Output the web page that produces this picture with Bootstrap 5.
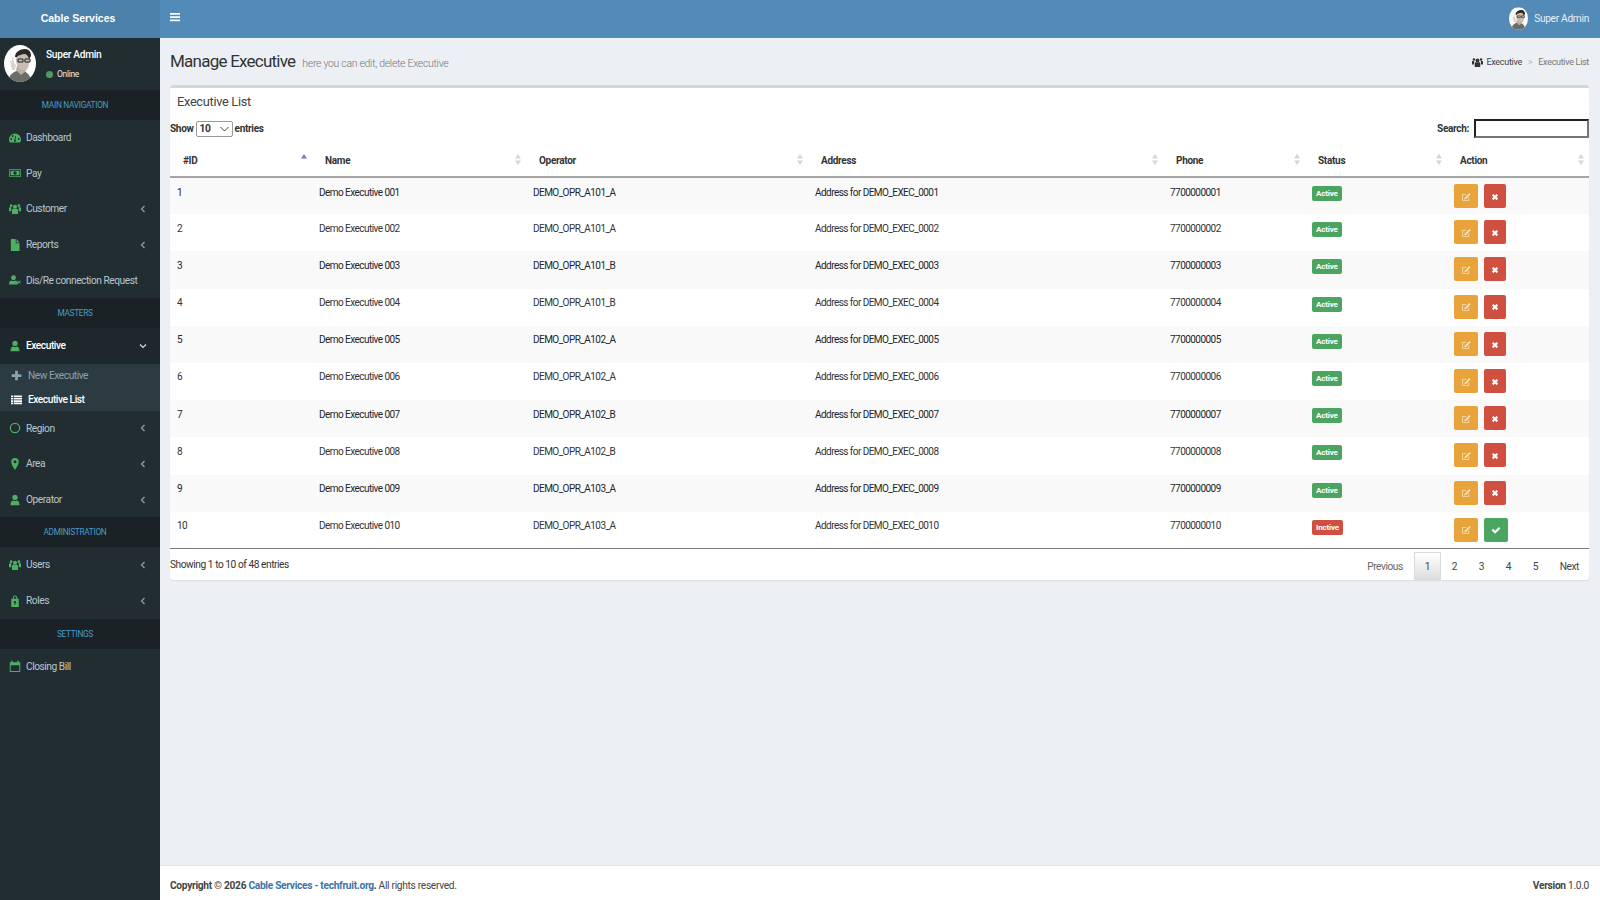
<!DOCTYPE html>
<html lang="en">
<head>
    <meta charset="UTF-8">
    <meta name="viewport" content="width=device-width, initial-scale=1.0">
    <title>Manage Executive</title>
    <link href="https://cdn.jsdelivr.net/npm/bootstrap@5.3.0/dist/css/bootstrap.min.css" rel="stylesheet">
    <style>
        html, body { height: 100%; }
        body { font-family: Roboto, "Noto Sans", sans-serif; font-size: 10.2px; letter-spacing: -.03em; color: #333; background: #ecf0f5; overflow: hidden; }
        .app-shell { height: 900px; }
        .side-col { width: 160px; background: #222d32; flex: none; }
        .logo-bar { height: 38px; background: #4c81ac; color: #fff; font: bold 10.5px "Liberation Sans", sans-serif; letter-spacing: 0; padding-right: 4px; padding-bottom: 2px; }
        .user-pane { height: 52px; padding: 7px 4px; gap: 10px; }
        .user-pane .who { font-weight: 500; font-size: 10.2px; color: #fff; line-height: 14px; margin-top: 3px; }
        .user-pane .state { font-size: 8.5px; color: #e5e9eb; line-height: 12px; margin-top: 6px; }
        .dot-online { width: 7px; height: 7px; border-radius: 50%; background: #4f9a5c; }
        .avatar-round { width: 32px; height: 37px; border-radius: 50%; flex: none; }
        .nav-head { height: 30px; background: #1a2226; color: #4b9cc9; font-size: 8.3px; text-align: center; line-height: 30px; padding-right: 10px; }
        .nav-row { height: 35.6px; color: #b8c7ce; font-size: 10.2px; letter-spacing: -.045em; padding-left: 9px; padding-right: 14px; text-decoration: none; white-space: nowrap; }
        .nav-row.is-open { background: #1e282c; color: #fff; font-weight: 500; }
        .nav-row svg.lead-ico { width: 12px; height: 12px; margin-right: 5px; flex: none; fill: #4caf64; }
        .nav-row .chev { width: 6px; height: 8px; margin-left: auto; fill: none; stroke: #8aa4af; stroke-width: 1.2; }
        .nav-row.is-open .chev { width: 8px; height: 6px; margin-right: -1px; stroke: #d5dde1; }
        .sub-wrap { background: #2c3b41; height: 47px; }
        .sub-row { height: 24px; padding-left: 11px; color: #8aa4af; font-size: 10.2px; letter-spacing: -.045em; text-decoration: none; }
        .sub-row.is-current { color: #fff; font-weight: 500; }
        .sub-row svg { width: 11px; height: 11px; margin-right: 6px; fill: currentColor; }
        .main-col { min-width: 0; }
        .top-bar { height: 38px; background: #528ab8; color: #fff; padding: 0 11px 0 10px; flex: none; border-bottom: 1px solid #5a8fba; }
        .top-bar .burger { width: 10px; height: 10px; fill: #fff; margin-top: -4px; }
        .top-bar .who-top { font-size: 10.2px; color: #e9f0f6; }
        .avatar-mini { width: 19px; height: 23px; border-radius: 50%; margin-right: 6px; }
        .page-area { padding: 0 11px 0 10px; }
        .page-head { height: 47px; padding-top: 2px; }
        .page-title { font-size: 17px; line-height: 1; font-weight: 400; color: #333; margin: 0; letter-spacing: -.045em; }
        .page-sub { font-size: 10.5px; color: #777; margin-left: 7px; font-weight: 300; }
        .crumbs { font-size: 9px; color: #444; }
        .crumbs svg { width: 11px; height: 11px; fill: #333; margin-right: 3px; }
        .crumbs .sep { color: #bbb; margin: 0 6px; }
        .crumbs .here { color: #777; }
        .list-box { background: #fff; border-top: 3px solid #d2d6de; border-radius: 3px; height: 495px; box-shadow: 0 1px 1px rgba(0,0,0,.08); }
        .box-head { height: 28px; padding: 4px 7px 0; font-size: 12.8px; line-height: 20px; color: #444; }
        .tool-row { height: 25px; font-weight: 700; font-size: 10px; color: #333; }
        .show-select { width: 37px; height: 16px; border: 1px solid #999; border-radius: 2px; padding-left: 3px; font-size: 10.2px; font-weight: 700; line-height: 14px; }
        .show-select svg { width: 9px; height: 6px; fill: none; stroke: #444; margin-left: auto; margin-right: 3px; }
        .tool-row .mx-1 { margin-left: 2px !important; margin-right: 2px !important; }
        .search-box { width: 115px; height: 19px; border: 2px inset #767676; margin-left: 5px; padding: 0 3px; font-size: 10px; }
        .exec-table { table-layout: fixed; width: 100%; margin: 0; font-size: 10px; letter-spacing: -.055em; color: #333; --bs-table-striped-bg: #f9f9f9; --bs-table-border-color: transparent; }
        .exec-table th { height: 36px; padding: 3px 0 0 13px; font-weight: 700; letter-spacing: -.03em; vertical-align: middle; position: relative; border-bottom: 2px solid #a5a5a5; }
        .exec-table td { height: 37.2px; padding: 7.5px 0 0 7px; vertical-align: top; line-height: 14px; border: 0; }
        .exec-table tbody tr:last-child td { border-bottom: 1px solid #777; }
        .w-id { width: 142px; } .w-name { width: 214px; } .w-opr { width: 282px; } .w-addr { width: 355px; }
        .w-phone { width: 142px; } .w-status { width: 142px; } .w-action { width: 142px; }
        .sort-mark { position: absolute; right: 5px; top: 50%; margin-top: -5px; width: 6px; height: 11px; }
        .state-tag { display: inline-block; color: #fff; font-size: 8px; font-weight: 700; letter-spacing: -.02em; border-radius: 2px; padding: 0 4px; height: 15px; line-height: 15px; margin-top: .5px; }
        .tag-on { background: #4ba560; }
        .tag-off { background: #cf5040; }
        .act-btn { height: 24px; width: 24px; border-radius: 2px; padding: 0; border: 0; margin-right: 6px; margin-left: 0; margin-top: 0; vertical-align: top; }
        .act-btn svg { width: 10px; height: 10px; }
        .btn-edit { background: #e8a33b; width: 24px; }
        .btn-drop { background: #cf5040; width: 22px; }
        .btn-okay { background: #4ba560; }
        .exec-table td.act-cell { padding-top: 6px; }
        .foot-row { height: 31px; color: #333; font-size: 10.2px; letter-spacing: -.045em; }
        .pager { height: 28px; align-self: flex-start; padding-right: 3px; margin-top: 3px; }
        .pager a { width: 27px; height: 28px; color: #444; font-size: 10.2px; text-decoration: none; }
        .pager a.step { width: auto; padding: 0 11px; color: #666; }
        .pager a.step:last-child { padding-right: 7px; color: #444; }
        .pager a.is-on { background: linear-gradient(#fff, #dcdcdc); border: 1px solid #dcdcdc; border-bottom: 0; }
        .page-foot { height: 35px; background: #fff; border-top: 1px solid #e2e5e9; padding: 5px 11px 0 10px; flex: none; font-size: 10.2px; color: #444; }
        .page-foot a { color: #3c75a5; font-weight: 700; text-decoration: none; }
    </style>
</head>
<body>
    <svg width="0" height="0" class="d-block position-absolute">
        <symbol id="i-face" viewBox="0 0 32 37">
            <rect width="32" height="37" fill="#fdfdfd"/>
            <path d="M4 37c1-8 6-11 12-12 6 1 10 4 12 12z" fill="#6d6d68"/>
            <path d="M12 25l2-7h9l-1 8-5 4z" fill="#b9afa5"/>
            <path d="M12 10c1-4 6-6 10-5 4 1 5 5 4 9l-2 9c-2 3-7 3-9 0l-3-6z" fill="#c9bdb1"/>
            <path d="M11 12c0-5 5-8 10-8 4 0 6 3 6 7l-2 3c-1-3-2-5-5-5-3 1-6 1-7 3z" fill="#2c2a29"/>
            <path d="M14 14h5v3h-5zM21 14h5v3h-5z" fill="none" stroke="#222" stroke-width="1"/>
            <path d="M6 16l2 9 3 0 1-5-2-2-1-6-1 0v5l-1-1z" fill="#ddd5cd"/>
        </symbol>
        <symbol id="i-gauge" viewBox="0 0 16 16"><path fill-rule="evenodd" d="M8 2a8 8 0 0 0-8 8c0 1.600.5 3.100 1.300 4h13.400c.8-.9 1.300-2.400 1.300-4a8 8 0 0 0-8-8zM3 10.500a1.200 1.200 0 1 1 0-2.400 1.200 1.200 0 0 1 0 2.400zm2-4a1.200 1.200 0 1 1 0-2.400 1.200 1.200 0 0 1 0 2.400zM8 13a1.500 1.500 0 0 1-.7-2.800l1.200-5 1 .2-1 5A1.500 1.500 0 0 1 8 13zm5-2.500a1.200 1.200 0 1 1 0-2.400 1.200 1.200 0 0 1 0 2.400z"/></symbol>
        <symbol id="i-money" viewBox="0 0 16 16"><path fill-rule="evenodd" d="M0 3h16v10H0zm1 1v8h14V4zm2 1h10a2 2 0 0 0 1 1v4a2 2 0 0 0-1 1H3a2 2 0 0 0-1-1V6a2 2 0 0 0 1-1zm5 .8A2.200 2.200 0 1 0 8 10.200 2.200 2.200 0 0 0 8 5.800z"/></symbol>
        <symbol id="i-users" viewBox="0 0 16 16"><circle cx="8" cy="5" r="2.800"/><circle cx="2.800" cy="3.500" r="1.800"/><circle cx="13.200" cy="3.500" r="1.800"/><path d="M4 9c0-1 1-1.500 2-1.500h4c1 0 2 .5 2 1.500v5.500H4zM0 6.500C0 6 .6 5.800 1.200 5.800h2L3 8v3H0zM16 6.500c0-.5-.6-.7-1.200-.7h-2L13 8v3h3z"/></symbol>
        <symbol id="i-file" viewBox="0 0 16 16"><path d="M2.500 0H9v5.500h5V16H2.500zM10 0l4 4.500h-4z"/></symbol>
        <symbol id="i-userx" viewBox="0 0 16 16"><circle cx="6" cy="5" r="3.300"/><path d="M0 14c0-3.500 1.500-5.500 3-5.500 1.500 1.200 4.500 1.200 6 0 1 0 2 1 2.500 2.500V14zM12 8.500l1.500 1.500L15 8.500l.8.8-1.500 1.500 1.500 1.500-.8.8-1.500-1.500-1.500 1.500-.8-.8 1.500-1.500-1.500-1.500z"/></symbol>
        <symbol id="i-user" viewBox="0 0 16 16"><circle cx="8" cy="4.500" r="3.500"/><path d="M2 15c0-4 1.500-6.500 3.500-6.500 1.500 1 3.500 1 5 0 2 0 3.500 2.500 3.500 6.500z"/></symbol>
        <symbol id="i-ring" viewBox="0 0 16 16"><path fill-rule="evenodd" d="M8 1a7 7 0 1 0 0 14A7 7 0 0 0 8 1zm0 1.600a5.400 5.400 0 1 1 0 10.800A5.400 5.400 0 0 1 8 2.600z"/></symbol>
        <symbol id="i-pin" viewBox="0 0 16 16"><path fill-rule="evenodd" d="M8 0a5 5 0 0 0-5 5c0 3 3 8 5 11 2-3 5-8 5-11a5 5 0 0 0-5-5zm0 3a2 2 0 1 1 0 4 2 2 0 0 1 0-4z"/></symbol>
        <symbol id="i-lock" viewBox="0 0 16 16"><path fill-rule="evenodd" d="M5 5V3.500a3 3 0 0 1 6 0V5h2v11H3V5zm1.500 0h3V3.500a1.500 1.500 0 0 0-3 0zM8 8a1.500 1.500 0 0 0-.6 2.900V13h1.200v-2.100A1.500 1.500 0 0 0 8 8z"/></symbol>
        <symbol id="i-cal" viewBox="0 0 16 16"><path fill-rule="evenodd" d="M1 3h2V1h2v2h6V1h2v2h2v13H1zm1.300 4v7.700h11.400V7z"/></symbol>
        <symbol id="i-plus" viewBox="0 0 16 16"><path d="M6 1h4v5h5v4h-5v5H6v-5H1V6h5z"/></symbol>
        <symbol id="i-list" viewBox="0 0 16 16"><path d="M0 2h3v2.500H0zM4 2h12v2.500H4zM0 5.500h3V8H0zM4 5.500h12V8H4zM0 9h3v2.500H0zM4 9h12v2.500H4zM0 12.500h3V15H0zM4 12.500h12V15H4z"/></symbol>
        <symbol id="i-edit" viewBox="0 0 16 16"><path d="M2 3h7L7.800 4.300H3.300v8.400h8.400V9L13 7.800V14H2z" fill="#f6e3bf"/><path d="M13.500 1.500l2 2L8 11l-3 1 1-3z" fill="#f6e3bf"/></symbol>
        <symbol id="i-times" viewBox="0 0 16 16"><path d="M3 5.500L5.500 3 8 5.500 10.500 3 13 5.500 10.500 8 13 10.500 10.500 13 8 10.500 5.500 13 3 10.500 5.500 8z" fill="#fff"/></symbol>
        <symbol id="i-check" viewBox="0 0 16 16"><path d="M1 8.500L3.500 6l3 3 6-6L15 5.500 6.500 14z" fill="#fff"/></symbol>
        <symbol id="i-sort" viewBox="0 0 6 11"><path d="M3 0l3 4.500H0z" fill="#d6d6d6"/><path d="M3 11L0 6.500h6z" fill="#d6d6d6"/></symbol>
        <symbol id="i-sortup" viewBox="0 0 6 11"><path d="M3 0l3 4.500H0z" fill="#7a7ec4"/></symbol>
        <symbol id="i-chev" viewBox="0 0 6 8"><path d="M4.500 1L1.500 4l3 3"/></symbol>
    </svg>

    <div class="app-shell d-flex">
        <!-- Sidebar -->
        <aside class="side-col d-flex flex-column">
            <div class="logo-bar d-flex align-items-center justify-content-center">Cable Services</div>
            <div class="user-pane d-flex">
                <svg class="avatar-round"><use href="#i-face"/></svg>
                <div>
                    <div class="who">Super Admin</div>
                    <div class="state d-flex align-items-center gap-1"><span class="dot-online"></span>Online</div>
                </div>
            </div>
            <div class="nav-head">MAIN NAVIGATION</div>
            <a class="nav-row d-flex align-items-center" href="#"><svg class="lead-ico"><use href="#i-gauge"/></svg>Dashboard</a>
            <a class="nav-row d-flex align-items-center" href="#"><svg class="lead-ico"><use href="#i-money"/></svg>Pay</a>
            <a class="nav-row d-flex align-items-center" href="#"><svg class="lead-ico"><use href="#i-users"/></svg>Customer<svg class="chev"><use href="#i-chev"/></svg></a>
            <a class="nav-row d-flex align-items-center" href="#"><svg class="lead-ico"><use href="#i-file"/></svg>Reports<svg class="chev"><use href="#i-chev"/></svg></a>
            <a class="nav-row d-flex align-items-center" href="#"><svg class="lead-ico"><use href="#i-userx"/></svg>Dis/Re connection Request</a>
            <div class="nav-head">MASTERS</div>
            <a class="nav-row is-open d-flex align-items-center" href="#"><svg class="lead-ico"><use href="#i-user"/></svg>Executive<svg class="chev" viewBox="0 0 8 6"><path d="M1 1.500l3 3 3-3"/></svg></a>
            <div class="sub-wrap">
                <a class="sub-row d-flex align-items-center" href="#"><svg><use href="#i-plus"/></svg>New Executive</a>
                <a class="sub-row is-current d-flex align-items-center" href="#"><svg><use href="#i-list"/></svg>Executive List</a>
            </div>
            <a class="nav-row d-flex align-items-center" href="#"><svg class="lead-ico"><use href="#i-ring"/></svg>Region<svg class="chev"><use href="#i-chev"/></svg></a>
            <a class="nav-row d-flex align-items-center" href="#"><svg class="lead-ico"><use href="#i-pin"/></svg>Area<svg class="chev"><use href="#i-chev"/></svg></a>
            <a class="nav-row d-flex align-items-center" href="#"><svg class="lead-ico"><use href="#i-user"/></svg>Operator<svg class="chev"><use href="#i-chev"/></svg></a>
            <div class="nav-head">ADMINISTRATION</div>
            <a class="nav-row d-flex align-items-center" href="#"><svg class="lead-ico"><use href="#i-users"/></svg>Users<svg class="chev"><use href="#i-chev"/></svg></a>
            <a class="nav-row d-flex align-items-center" href="#"><svg class="lead-ico"><use href="#i-lock"/></svg>Roles<svg class="chev"><use href="#i-chev"/></svg></a>
            <div class="nav-head">SETTINGS</div>
            <a class="nav-row d-flex align-items-center" href="#"><svg class="lead-ico"><use href="#i-cal"/></svg>Closing Bill</a>
        </aside>

        <div class="main-col flex-grow-1 d-flex flex-column">
            <!-- Top bar -->
            <header class="top-bar d-flex align-items-center justify-content-between">
                <svg class="burger" viewBox="0 0 10 10"><path d="M0 1h10v1.800H0zM0 4.200h10V6H0zM0 7.400h10v1.800H0z"/></svg>
                <div class="who-top d-flex align-items-center"><svg class="avatar-mini"><use href="#i-face"/></svg>Super Admin</div>
            </header>

            <main class="page-area flex-grow-1">
                <div class="page-head d-flex align-items-center justify-content-between">
                    <div class="d-flex align-items-baseline">
                        <h1 class="page-title">Manage Executive</h1>
                        <span class="page-sub">here you can edit, delete Executive</span>
                    </div>
                    <div class="crumbs d-flex align-items-center">
                        <svg><use href="#i-users"/></svg>Executive<span class="sep">&gt;</span><span class="here">Executive List</span>
                    </div>
                </div>

                <section class="list-box">
                    <div class="box-head">Executive List</div>
                    <div class="tool-row d-flex align-items-center justify-content-between">
                        <div class="d-flex align-items-center">Show
                            <span class="show-select d-inline-flex align-items-center mx-1">10<svg viewBox="0 0 9 6"><path d="M.5 1l4 4 4-4"/></svg></span>
                            entries</div>
                        <div class="d-flex align-items-center">Search:<input class="search-box" type="text"></div>
                    </div>
                    <table class="table table-striped exec-table">
                        <colgroup>
                            <col class="w-id"><col class="w-name"><col class="w-opr"><col class="w-addr">
                            <col class="w-phone"><col class="w-status"><col class="w-action">
                        </colgroup>
                        <thead>
                            <tr>
                                <th>#ID<svg class="sort-mark"><use href="#i-sortup"/></svg></th>
                                <th>Name<svg class="sort-mark"><use href="#i-sort"/></svg></th>
                                <th>Operator<svg class="sort-mark"><use href="#i-sort"/></svg></th>
                                <th>Address<svg class="sort-mark"><use href="#i-sort"/></svg></th>
                                <th>Phone<svg class="sort-mark"><use href="#i-sort"/></svg></th>
                                <th>Status<svg class="sort-mark"><use href="#i-sort"/></svg></th>
                                <th>Action<svg class="sort-mark"><use href="#i-sort"/></svg></th>
                            </tr>
                        </thead>
                        <tbody id="execRows"></tbody>
                    </table>
                    <div class="foot-row d-flex align-items-center justify-content-between">
                        <span>Showing 1 to 10 of 48 entries</span>
                        <div class="pager d-flex align-items-stretch">
                            <a class="step d-flex align-items-center" href="#">Previous</a>
                            <a class="is-on d-flex align-items-center justify-content-center" href="#">1</a>
                            <a class="d-flex align-items-center justify-content-center" href="#">2</a>
                            <a class="d-flex align-items-center justify-content-center" href="#">3</a>
                            <a class="d-flex align-items-center justify-content-center" href="#">4</a>
                            <a class="d-flex align-items-center justify-content-center" href="#">5</a>
                            <a class="step d-flex align-items-center" href="#">Next</a>
                        </div>
                    </div>
                </section>
            </main>

            <footer class="page-foot d-flex align-items-center justify-content-between">
                <div><strong>Copyright © 2026 <a href="#">Cable Services - techfruit.org</a>.</strong> All rights reserved.</div>
                <div><strong>Version</strong> 1.0.0</div>
            </footer>
        </div>
    </div>

    <script src="https://cdn.jsdelivr.net/npm/bootstrap@5.3.0/dist/js/bootstrap.bundle.min.js"></script>
    <script>
        const operators = ['A101_A', 'A101_A', 'A101_B', 'A101_B', 'A102_A', 'A102_A', 'A102_B', 'A102_B', 'A103_A', 'A103_A'];
        const rows = operators.map((opr, i) => {
            const n = i + 1;
            const pad = String(n).padStart(3, '0');
            const active = n < 10;
            return `<tr>
                <td>${n}</td>
                <td>Demo Executive ${pad}</td>
                <td>DEMO_OPR_${opr}</td>
                <td>Address for DEMO_EXEC_0${pad}</td>
                <td>7700000${pad}</td>
                <td><span class="state-tag ${active ? 'tag-on' : 'tag-off'}">${active ? 'Active' : 'Inctive'}</span></td>
                <td class="act-cell"><button class="btn act-btn btn-edit"><svg><use href="#i-edit"/></svg></button><button class="btn act-btn ${active ? 'btn-drop' : 'btn-okay'}"><svg><use href="${active ? '#i-times' : '#i-check'}"/></svg></button></td>
            </tr>`;
        });
        document.getElementById('execRows').innerHTML = rows.join('');
    </script>
</body>
</html>
